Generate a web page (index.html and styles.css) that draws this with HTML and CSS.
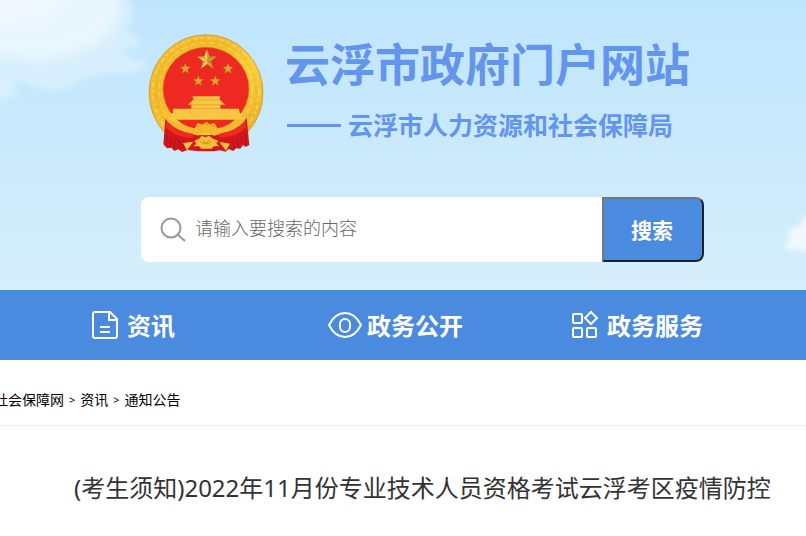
FILE: index.html
```html
<!DOCTYPE html>
<html lang="zh-CN">
<head>
    <meta charset="utf-8">
    <meta name="viewport" content="width=device-width, initial-scale=1">
    <title>云浮市人力资源和社会保障局</title>
    <link rel="stylesheet" href="styles.css">
</head>
<body>
    <header class="header">
        <!-- clouds -->
        <svg class="cloud cloud-left" viewBox="0 0 160 170" aria-hidden="true">
            <filter id="soft" x="-30%" y="-30%" width="160%" height="160%"><feGaussianBlur stdDeviation="7"/></filter>
            <filter id="soft3" x="-30%" y="-30%" width="160%" height="160%"><feGaussianBlur stdDeviation="3"/></filter>
            <g fill="#fff">
                <path filter="url(#soft3)" opacity=".32" d="M-20-20H112Q128-4 134 14Q132 26 124 31Q138 34 141 42Q136 50 118 50Q130 60 147 62Q146 73 124 74Q96 72 80 80Q64 92 48 90Q28 84 14 78Q18 92 12 98L-20 102Z"/>
                <path filter="url(#soft)" opacity=".5" d="M-20-20H112Q126 2 118 20Q108 44 78 52Q52 62 30 60Q12 58-20 50Z"/>
                <path filter="url(#soft)" opacity=".35" d="M-20-20H60Q70 5 40 16Q10 24-20 20Z"/>
            </g>
        </svg>
        <svg class="cloud cloud-right" viewBox="0 0 80 140" aria-hidden="true">
            <filter id="soft2" x="-30%" y="-30%" width="160%" height="160%"><feGaussianBlur stdDeviation="2"/></filter>
            <path filter="url(#soft2)" fill="#fff" opacity=".65" d="M90 60Q77 66 74 75Q64 78 62 84Q67 88 61 93Q56 98 62 100Q72 98 78 101L90 102Z"/>
        </svg>

        <div class="brand">
            <svg class="emblem" viewBox="0 0 405 405" role="img" aria-label="国徽">
                <defs>
                    <linearGradient id="gold" x1="0" y1="0" x2="1" y2="1">
                        <stop offset="0" stop-color="#f3c02f"/>
                        <stop offset=".35" stop-color="#f0b92b"/>
                        <stop offset=".6" stop-color="#fad03a"/>
                        <stop offset="1" stop-color="#e0a024"/>
                    </linearGradient>
                    <path id="star" d="M0-31L8-10L30-10L12 4L19 27L0 13L-19 27L-12 4L-30-10L-8-10Z"/>
                </defs>
                <ellipse cx="198" cy="203" rx="171" ry="174" fill="url(#gold)" stroke="#c98d28" stroke-width="2"/>
                <ellipse cx="198" cy="200" rx="160" ry="162" fill="none" stroke="#fbdc62" stroke-width="5" stroke-dasharray="13 9 6 12" opacity=".7"/>
                <ellipse cx="198" cy="198" rx="150" ry="152" fill="none" stroke="#dda42a" stroke-width="3" stroke-dasharray="9 14 4 8" opacity=".7"/>
                <ellipse cx="198" cy="195" rx="140" ry="142" fill="none" stroke="#fbd956" stroke-width="4" stroke-dasharray="16 12" opacity=".6"/>
                <ellipse cx="198" cy="192" rx="129" ry="125" fill="#ed2921" stroke="#cf7c20" stroke-width="2"/>
                <g fill="#dba62f" stroke="#9f621f" stroke-width="1">
                    <use href="#star" transform="translate(201 104)"/>
                    <use href="#star" transform="translate(136 131) scale(.54)"/>
                    <use href="#star" transform="translate(264 131) scale(.54)"/>
                    <use href="#star" transform="translate(175 168) scale(.54)"/>
                    <use href="#star" transform="translate(226 168) scale(.54)"/>
                </g>
                <path fill="#f5d06a" d="M201 75V104L193 94ZM173 95L201 104L189 108ZM183 130L201 104V117Z"/>
                <path fill="#a8702a" d="M229 95L201 104L209 94ZM219 130L201 104L213 108Z" opacity=".6"/>
                <!-- gate tower -->
                <path fill="#f8c642" d="M157 214H241L238 223L255 239H241V251H297L299 263L306 266L307 284H91L93 266L99 263V251H154V239H144L161 223Z"/>
                <path fill="none" stroke="#d99a2c" stroke-width="2" d="M158 225H240M146 239H254M155 251H242"/>
                <!-- drapery -->
                <path fill="#d3161c" d="M76 281Q99 317 151 329L195 331L249 328Q302 315 320 278L328 360L317 366L309 360L301 371L288 370L280 378L266 372L257 380L240 376L222 379H175L143 375L126 381L115 373L103 378L94 368L81 370L70 358Z"/>
                <path fill="#ed2a24" d="M79 287Q118 325 164 323L157 338Q112 341 77 307ZM318 287Q277 324 235 323L238 337Q290 338 319 307Z"/>
                <path fill="none" stroke="#9e1018" stroke-width="2" d="M82 327L79 362M94 336L91 365M107 342L102 371M119 345L116 372M130 347L128 373M316 329L318 360M304 337L307 361M291 340L297 368M277 343L283 371M264 345L268 372"/>
                <path fill="#f4b82c" d="M77 278Q99 291 137 304L164 310L173 295L189 298L199 290L210 298L223 294L232 310L263 304Q295 291 318 279Q293 316 239 326L222 333Q208 321 197 322Q183 322 175 332L157 326Q103 316 77 278Z"/>
                <path fill="#f7c137" d="M163 347L180 340L184 332L196 337L207 332L219 341L235 347L229 356L238 363L222 364L214 371H184L177 364H159L169 356ZM129 354L160 350L141 376ZM238 350L270 356L258 377Z"/>
                <path fill="none" stroke="#cf8e22" stroke-width="3" d="M174 305Q197 286 224 306M181 350Q198 362 215 350M190 345L198 358L207 345"/>
            </svg>
            <div class="brand-text">
                <h1 class="site-name">云浮市政府门户网站</h1>
                <p class="dept-name"><span class="rule"></span>云浮市人力资源和社会保障局</p>
            </div>
        </div>

        <form class="search" role="search">
            <label class="search-label" for="keyword" aria-label="搜索">
                <svg class="search-icon" viewBox="0 0 26 26" aria-hidden="true">
                    <circle cx="11" cy="11" r="9.5"/>
                    <path d="M17 17L25 24"/>
                </svg>
            </label>
            <input class="search-input" type="text" id="keyword" placeholder="请输入要搜索的内容">
            <button class="search-btn" type="button">搜索</button>
        </form>
    </header>

    <nav class="nav">
        <a class="nav-item" href="#">
            <svg class="nav-icon" viewBox="0 0 36 30" aria-hidden="true">
                <path d="M8 2H23L30 9V26Q30 28 28 28H8Q6 28 6 26V4Q6 2 8 2ZM22 2V10H30M13 17H23M13 22H23"/>
            </svg>
            资讯
        </a>
        <a class="nav-item" href="#">
            <svg class="nav-icon" viewBox="0 0 36 30" aria-hidden="true">
                <path d="M2 15Q8 3 18 3Q28 3 34 15Q28 27 18 27Q8 27 2 15Z"/>
                <rect x="13" y="9" width="10" height="13" rx="5"/>
            </svg>
            政务公开
        </a>
        <a class="nav-item" href="#">
            <svg class="nav-icon" viewBox="0 0 36 30" aria-hidden="true">
                <rect x="6" y="4" width="9" height="9" rx="1"/>
                <rect x="6" y="18" width="9" height="9" rx="1"/>
                <rect x="20" y="18" width="9" height="9" rx="1"/>
                <path d="M24 2L30 8L24 14L18 8Z"/>
            </svg>
            政务服务
        </a>
    </nav>

    <main>
        <div class="crumbs">
            <a href="#">社会保障网</a>
            <span class="sep">&gt;</span>
            <a href="#">资讯</a>
            <span class="sep">&gt;</span>
            <a href="#">通知公告</a>
        </div>
        <h2 class="article-title">(考生须知)2022年11月份专业技术人员资格考试云浮考区疫情防控</h2>
    </main>
</body>
</html>
```
FILE: styles.css
```css
* {
    box-sizing: border-box;
}

body {
    margin: 0;
    background: #fff;
    color: #000;
    font-family: "Noto Sans", "Noto Sans CJK SC", sans-serif;
    overflow-x: hidden;
}

a {
    color: inherit;
    text-decoration: none;
}

.header {
    position: relative;
    overflow: hidden;
    padding: 25px 102px 28px 140px;
    background: linear-gradient(#bfe5fd, #c9e9fc 45%, #d6effb);
}

.cloud {
    position: absolute;
}

.cloud-left {
    left: 0;
    top: 0;
    width: 160px;
}

.cloud-right {
    right: 0;
    top: 150px;
    width: 80px;
}

.brand {
    position: relative;
    display: flex;
    gap: 10px;
}

.emblem {
    width: 135px;
    height: 135px;
    flex: none;
}

.brand-text {
    padding-top: 10px;
    color: #6495ed;
    white-space: nowrap;
}

.site-name {
    margin: 0;
    font-size: 45px;
    line-height: 60px;
}

.dept-name {
    display: flex;
    align-items: center;
    gap: 7px;
    margin: 12px 0 0;
    font-size: 25px;
    font-weight: bold;
    line-height: 36px;
}

.rule {
    width: 54px;
    height: 3px;
    margin-left: 2px;
    background: #6495ed;
}

.search {
    position: relative;
    display: flex;
    height: 65px;
    margin-top: 37px;
    margin-left: 1px;
    background: #fff;
    border-radius: 8px;
}

.search-label {
    display: flex;
    align-items: center;
    padding: 0 9px 0 19px;
}

.search-icon {
    width: 26px;
    height: 26px;
    fill: none;
    stroke: #999;
    stroke-width: 2;
}

.search-input {
    flex: 1;
    min-width: 0;
    padding: 0 0 4px;
    border: none;
    outline: none;
    background: none;
    font-family: inherit;
    font-size: 18px;
    font-weight: 300;
}

.search-input::placeholder {
    color: #666;
}

.search-btn {
    width: 102px;
    padding: 0 2px 2px 0;
    border: 2px solid;
    border-color: #767676 #212121 #212121 #767676;
    border-radius: 0 8px 8px 0;
    background: #4a8bdf;
    color: #fff;
    font-family: inherit;
    font-size: 21px;
    font-weight: bold;
    cursor: pointer;
}

.nav {
    display: grid;
    grid-template-columns: repeat(3, 240px);
    height: 70px;
    padding-left: 87px;
    background: #4a8bdf;
    color: #fff;
}

.nav-item {
    display: flex;
    align-items: center;
    gap: 4px;
    padding-bottom: 1px;
    font-size: 24px;
    font-weight: bold;
}

.nav-icon {
    width: 36px;
    height: 30px;
    fill: none;
    stroke: #fff;
    stroke-width: 2;
}

.crumbs {
    display: flex;
    gap: 5px;
    margin-left: -6px;
    padding: 30px 0 15px;
    border-bottom: 1px solid #eee;
    font-size: 14px;
    line-height: 20px;
}

.sep {
    font-size: 11px;
}

.article-title {
    margin: 0;
    padding: 44px 0 30px 74px;
    color: #333;
    font-size: 24px;
    font-weight: normal;
    line-height: 36px;
    white-space: nowrap;
}
```
